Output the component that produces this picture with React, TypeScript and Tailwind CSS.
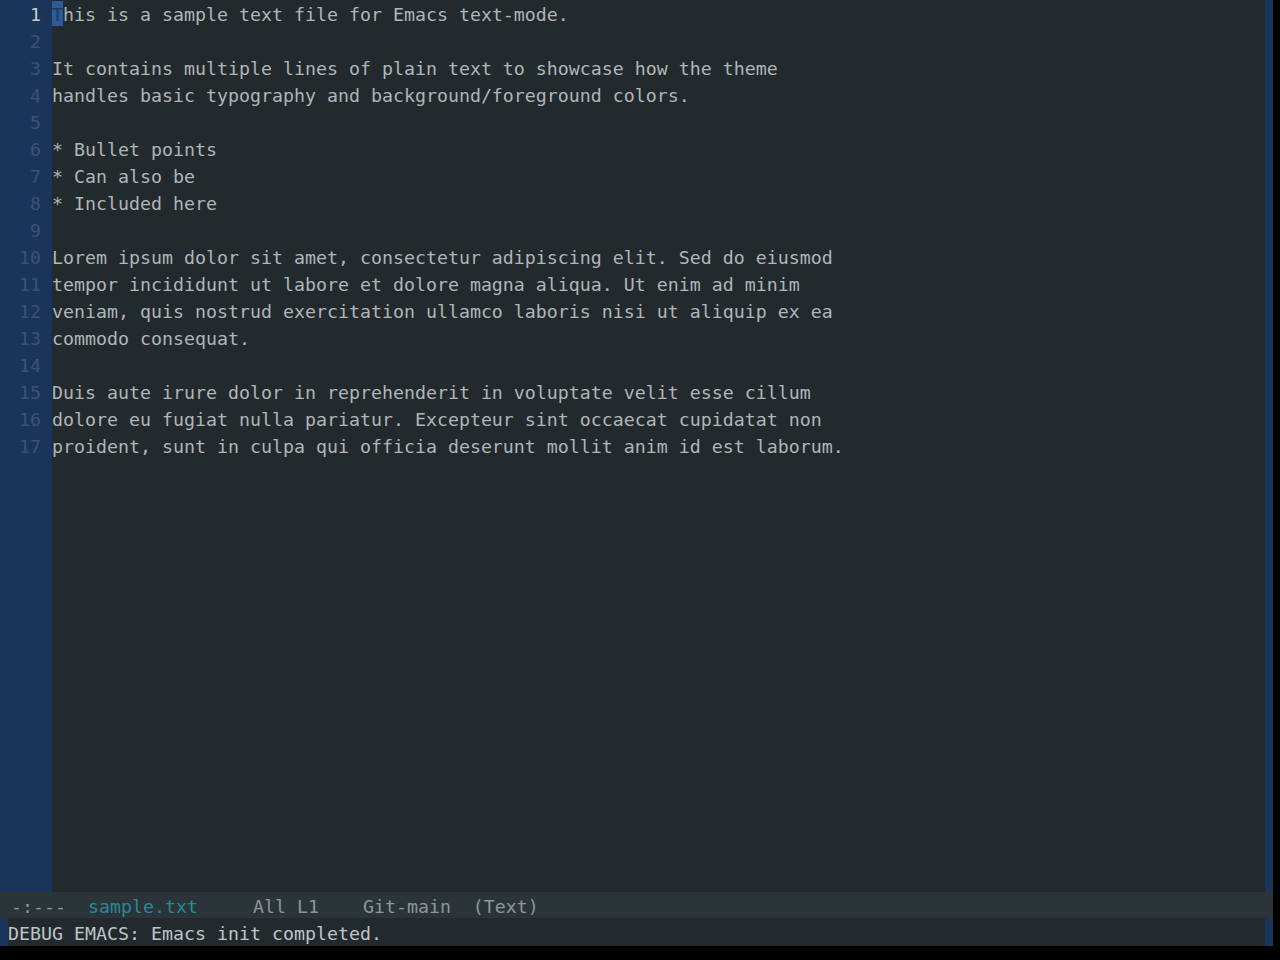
const lines = [
  "This is a sample text file for Emacs text-mode.",
  "",
  "It contains multiple lines of plain text to showcase how the theme",
  "handles basic typography and background/foreground colors.",
  "",
  "* Bullet points",
  "* Can also be",
  "* Included here",
  "",
  "Lorem ipsum dolor sit amet, consectetur adipiscing elit. Sed do eiusmod",
  "tempor incididunt ut labore et dolore magna aliqua. Ut enim ad minim",
  "veniam, quis nostrud exercitation ullamco laboris nisi ut aliquip ex ea",
  "commodo consequat.",
  "",
  "Duis aute irure dolor in reprehenderit in voluptate velit esse cillum",
  "dolore eu fugiat nulla pariatur. Excepteur sint occaecat cupidatat non",
  "proident, sunt in culpa qui officia deserunt mollit anim id est laborum.",
];

export default function App() {
  return (
    <div
      className="w-[1280px] h-[960px] bg-black flex flex-col overflow-hidden text-[18.27px]"
      style={{ fontFamily: '"DejaVu Sans Mono", "Liberation Mono", monospace' }}
    >
      {/* editor window */}
      <div className="flex h-[892px] w-[1273px]">
        <div className="w-[52px] bg-[#1b355a] flex flex-col">
          {lines.map((_, i) => (
            <div
              key={i}
              className={`h-[27px] leading-[29px] pr-[11px] text-right ${
                i === 0 ? "text-[#c6cbcf]" : "text-[#3c5370]"
              }`}
            >
              {i + 1}
            </div>
          ))}
        </div>
        <div className="flex-1 bg-[#232a2e] flex flex-col text-[#afb5b9] whitespace-pre">
          {lines.map((l, i) => (
            <div key={i} className="h-[27px] leading-[29px]">
              {i === 0 ? (
                <>
                  <span className="inline-block h-[25px] leading-[27px] bg-[#2d5a99] text-[#1e3a5c]">T</span>
                  {l.slice(1)}
                </>
              ) : (
                l
              )}
            </div>
          ))}
        </div>
        <div className="w-[8px] bg-[#1b355a]" />
      </div>

      {/* mode line */}
      <div className="h-[26px] w-[1273px] bg-[#2b3539] text-[#8d969b] whitespace-pre leading-[29px]">
        {" -:---  "}
        <span className="text-[#2a8797]">sample.txt</span>
        {"     All L1    Git-main  (Text)"}
      </div>

      {/* echo area */}
      <div className="flex h-[28px] w-[1273px]">
        <div className="w-[8px] bg-[#1b355a]" />
        <div className="flex-1 bg-[#232a2e] text-[#bfc4c7] whitespace-pre leading-[31px]">
          DEBUG EMACS: Emacs init completed.
        </div>
        <div className="w-[8px] bg-[#1b355a]" />
      </div>
    </div>
  );
}
